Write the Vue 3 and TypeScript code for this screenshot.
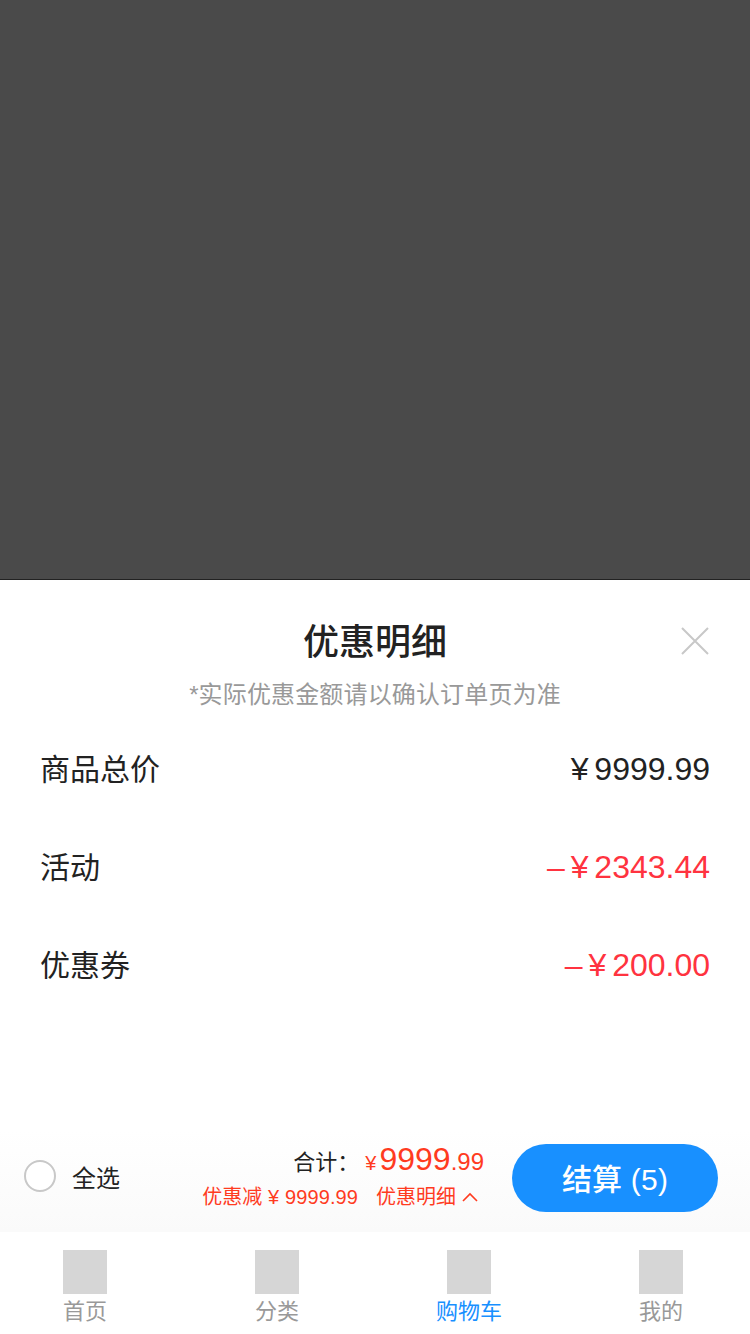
<script setup lang="ts">
interface Row { label: string; value: string; minus: boolean }
const rows: Row[] = [
  { label: '商品总价', value: '¥ 9999.99', minus: false },
  { label: '活动', value: '– ¥ 2343.44', minus: true },
  { label: '优惠券', value: '– ¥ 200.00', minus: true },
]
const tabs = [
  { label: '首页', active: false },
  { label: '分类', active: false },
  { label: '购物车', active: true },
  { label: '我的', active: false },
]
</script>

<template>
  <div class="page">
    <div class="mask"></div>
    <section class="sheet">
      <header class="head">
        <h1 class="title">优惠明细</h1>
        <svg class="close" width="28" height="28" viewBox="0 0 28 28" fill="none" stroke="#c8c8c8" stroke-width="2">
          <path d="M1 1 L27 27 M27 1 L1 27" />
        </svg>
        <p class="sub">*实际优惠金额请以确认订单页为准</p>
      </header>
      <div class="rows">
        <div v-for="r in rows" :key="r.label" class="row">
          <span class="label">{{ r.label }}</span>
          <span class="value" :class="{ minus: r.minus }">{{ r.value }}</span>
        </div>
      </div>
      <div class="bar">
        <div class="all">
          <span class="radio"></span>
          <span class="all-text">全选</span>
        </div>
        <div class="sum">
          <div class="total">
            <span class="total-label">合计：</span>
            <span class="yen">¥</span><span class="big">9999</span><span class="cents">.99</span>
          </div>
          <div class="discount">
            <span class="saved">优惠减 ¥ 9999.99</span>
            <span class="detail"><span>优惠明细</span><svg width="16" height="10" viewBox="0 0 16 10" fill="none" stroke="#ff3b1f" stroke-width="1.6"><path d="M1 9 L8 2 L15 9" /></svg></span>
          </div>
        </div>
        <button class="pay">结算 (5)</button>
      </div>
      <nav class="tabs">
        <div v-for="t in tabs" :key="t.label" class="tab" :class="{ active: t.active }">
          <span class="ico"></span>
          <span class="tab-text">{{ t.label }}</span>
        </div>
      </nav>
    </section>
  </div>
</template>

<style>
html, body { margin: 0; padding: 0; background: #fff; }
</style>

<style scoped>
.page {
  width: 750px;
  height: 1334px;
  display: flex;
  flex-direction: column;
  font-family: "Liberation Sans", "Noto Sans CJK SC", sans-serif;
  overflow: hidden;
}
.mask { height: 579px; background: #4a4a4a; border-bottom: 1px solid #222; }
.sheet { flex: 1; display: flex; flex-direction: column; background: #fff; min-height: 0; }
.head { position: relative; text-align: center; padding-top: 40px; }
.title { margin: 0; font-size: 36px; line-height: 46px; font-weight: 500; color: #222; }
.close { position: absolute; right: 41px; top: 47px; }
.sub { margin: 12px 0 0; font-size: 24px; line-height: 34px; color: #999; letter-spacing: 0.15px; }
.rows { padding: 6px 40px 0; display: flex; flex-direction: column; }
.row { height: 98px; display: flex; align-items: center; justify-content: space-between; }
.label { font-size: 30px; color: #222; }
.value { font-size: 32px; padding-top: 4px; color: #222; white-space: pre; word-spacing: -3px; }
.value.minus { color: #ff3340; }
.bar {
  height: 102px;
  margin-top: auto;
  box-sizing: border-box;
  display: flex;
  align-items: flex-start;
  padding: 14px 32px 0 24px;
  background: linear-gradient(#fff, #fafafa);
}
.all { display: flex; align-items: center; gap: 16px; padding-top: 4px; width: 178px; height: 56px; }
.radio { width: 32px; height: 32px; box-sizing: border-box; border: 2px solid #c8c8c8; border-radius: 50%; background: #fff; }
.all-text { font-size: 24px; color: #222; }
.sum { width: 282px; margin-top: -3px; display: flex; flex-direction: column; align-items: flex-end; }
.total { display: flex; align-items: baseline; height: 38px; white-space: pre; color: #ff3b1f; }
.total-label { font-size: 22px; color: #222; margin-right: 6px; }
.yen { font-size: 20px; margin-right: 3px; }
.big { font-size: 32px; }
.cents { font-size: 24px; }
.discount { display: flex; align-items: center; gap: 18px; margin-top: 3px; font-size: 20px; line-height: 30px; color: #ff3b1f; white-space: pre; }
.saved { letter-spacing: 0.1px; }
.detail { display: flex; align-items: center; gap: 6px; padding-right: 6px; }
.pay {
  margin-left: 28px;
  width: 206px;
  height: 68px;
  padding: 0 0 3px;
  border: 0;
  border-radius: 34px;
  background: #1890ff;
  color: #fff;
  font: inherit;
  font-size: 30px;
  font-weight: 500;
  letter-spacing: 0.2px;
}
.tabs { height: 102px; display: grid; grid-template-columns: repeat(4, 192px); margin-left: -11px; }
.tab { display: flex; flex-direction: column; align-items: center; padding-top: 18px; color: #999; }
.tab.active { color: #1890ff; }
.ico { width: 44px; height: 44px; background: #d6d6d6; }
.tab-text { font-size: 22px; line-height: 28px; margin-top: 4px; }
</style>
